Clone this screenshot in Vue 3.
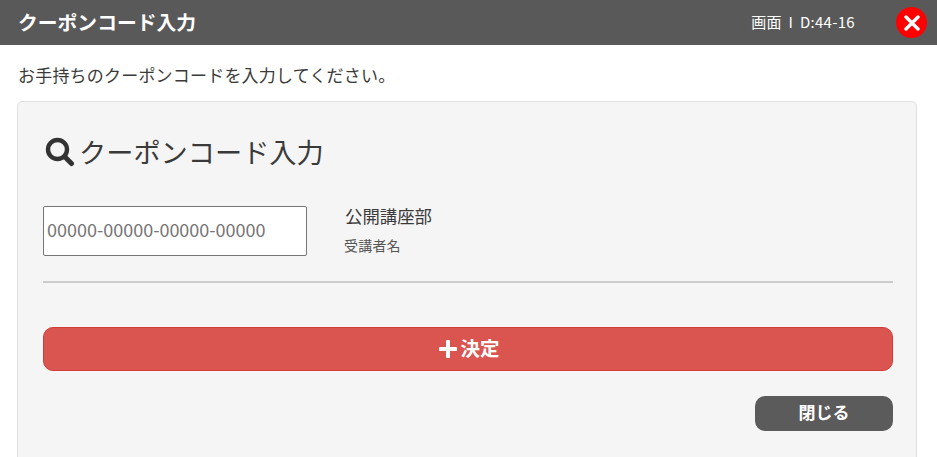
<script setup>
const couponPlaceholder = "00000-00000-00000-00000";
</script>

<template>
  <div class="modal">
    <header class="head">
      <h1>クーポンコード入力</h1>
      <span class="screen-id">画面 I D:44-16</span>
      <button class="close" aria-label="閉じる">
        <svg width="16" height="16" viewBox="0 0 16 16">
          <path d="M2 2 L14 14 M14 2 L2 14" stroke="#fff" stroke-width="3.4" stroke-linecap="round" />
        </svg>
      </button>
    </header>
    <p class="lead">お手持ちのクーポンコードを入力してください。</p>
    <section class="card">
      <h2>
        <svg class="search" width="30" height="30" viewBox="0 0 30 30">
          <circle cx="12.5" cy="12.5" r="9.5" fill="none" stroke="#333" stroke-width="4.4" />
          <path d="M19.5 19.5 L26.5 26.5" stroke="#333" stroke-width="5" stroke-linecap="round" />
        </svg>
        <span class="title">クーポンコード入力</span>
      </h2>
      <div class="row">
        <input type="text" :placeholder="couponPlaceholder" />
        <div class="info">
          <div class="org">公開講座部</div>
          <div class="name">受講者名</div>
        </div>
      </div>
      <button class="submit">
        <svg width="18" height="18" viewBox="0 0 18 18">
          <path d="M9 1.5 V16.5 M1.5 9 H16.5" stroke="#fff" stroke-width="4" stroke-linecap="round" />
        </svg>
        <span class="submit-label">決定</span>
      </button>
      <div class="foot">
        <button class="back">閉じる</button>
      </div>
    </section>
  </div>
</template>

<style>
html, body {
  margin: 0;
  background: #fff;
  overflow: hidden;
}
</style>

<style scoped>
.modal {
  width: 937px;
  height: 457px;
  overflow: hidden;
  font-family: "Noto Sans CJK JP", "Noto Sans", sans-serif;
  color: #3a3a3a;
}

.head {
  height: 45px;
  background: #595959;
  display: flex;
  align-items: center;
  padding: 0 10px 0 18px;
  color: #fff;
}

.head h1 {
  margin: 0 0 3px;
  font-size: 19.8px;
  font-weight: 700;
  flex: 1;
}

.screen-id {
  font-size: 15px;
  letter-spacing: 0.3px;
  word-spacing: 3px;
  white-space: pre;
  margin: 0 41px 3px 0;
}

.close {
  width: 31px;
  height: 31px;
  border: none;
  border-radius: 50%;
  background: #f00;
  padding: 0;
  display: flex;
  align-items: center;
  justify-content: center;
}

.lead {
  margin: 0;
  padding: 18px 0 15px 18px;
  font-size: 17px;
  letter-spacing: 0.2px;
  line-height: 23px;
}

.card {
  margin-left: 17px;
  width: 900px;
  box-sizing: border-box;
  height: 400px;
  background: #f5f5f5;
  border: 1px solid #e0e0e0;
  border-radius: 5px;
  padding: 30px 23px 0 25px;
}

.card h2 {
  margin: 0;
  display: flex;
  align-items: center;
  gap: 4px;
  height: 40px;
  font-size: 27.2px;
  font-weight: 400;
  line-height: 40px;
  margin-left: 2px;
}

.title {
  margin-top: -2px;
}

.row {
  display: flex;
  margin-top: 34px;
  padding-bottom: 25px;
  border-bottom: 2px solid #ccc;
}

.row input {
  width: 264px;
  height: 50px;
  box-sizing: border-box;
  border: 1px solid #767676;
  border-radius: 2px;
  background: #fff;
  padding: 0 3px 4px;
  font-family: inherit;
  font-size: 18px;
}

.row input::placeholder {
  color: #757575;
}

.info {
  margin-left: 38px;
}

.org {
  font-size: 17.4px;
  line-height: 24px;
  margin-top: -2px;
}

.name {
  font-size: 14px;
  letter-spacing: 0.2px;
  line-height: 20px;
  margin-top: 7px;
  margin-left: -1px;
  color: #555;
}

.submit {
  width: 100%;
  height: 44px;
  margin-top: 44px;
  box-sizing: border-box;
  background: #db5550;
  border: 1px solid #d33c38;
  border-radius: 10px;
  color: #fff;
  font-family: inherit;
  font-size: 19.5px;
  font-weight: 700;
  display: flex;
  align-items: center;
  justify-content: center;
  gap: 3px;
  padding: 0 0 0 3px;
}

.submit-label {
  margin-top: -4px;
}

.foot {
  display: flex;
  justify-content: flex-end;
  margin-top: 25px;
}

.back {
  width: 138px;
  height: 35px;
  background: #5b5b5b;
  border: none;
  border-radius: 10px;
  color: #fff;
  font-family: inherit;
  font-size: 17px;
  font-weight: 700;
  padding: 0 0 4px;
}
</style>
